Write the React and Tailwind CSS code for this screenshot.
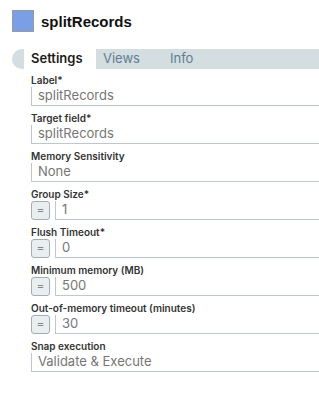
const fields = [
  { label: "Label*", value: "splitRecords" },
  { label: "Target field*", value: "splitRecords" },
  { label: "Memory Sensitivity", value: "None" },
  { label: "Group Size*", value: "1", expr: true },
  { label: "Flush Timeout*", value: "0", expr: true },
  { label: "Minimum memory (MB)", value: "500", expr: true },
  { label: "Out-of-memory timeout (minutes)", value: "30", expr: true },
  { label: "Snap execution", value: "Validate & Execute" },
];

function Field({ label, value, expr }) {
  return (
    <div className="flex flex-col">
      <span className="text-[10px] leading-[14px] font-semibold text-[#333]">
        {label}
      </span>
      <div className="flex items-stretch gap-[5px]">
        {expr && (
          <button className="flex h-[19px] w-[19px] shrink-0 items-center justify-center rounded-[3px] border border-[#a3adb2] bg-[#e9eef0] text-[12px] leading-none text-[#7d878c]">
            =
          </button>
        )}
        <div className="flex h-[19px] flex-1 items-center border-b border-l border-[#bcc8cd] pl-[6px] text-[13px] text-[#767676]">
          {value}
        </div>
      </div>
    </div>
  );
}

export default function App() {
  return (
    <div className="h-[400px] w-[319px] overflow-hidden bg-white [font-family:Inter,sans-serif]">
      <div className="flex items-center gap-[7px] px-[12px] pt-[8px]">
        <div className="h-[22px] w-[22px] border border-[#9a9a9a] bg-[#7b9fe6]" />
        <h1 className="mt-[3px] [font-family:'Liberation_Sans',sans-serif] text-[15px] font-bold text-[#111]">
          splitRecords
        </h1>
      </div>

      <div className="ml-[12px] mt-[15px] flex h-[20px] items-stretch rounded-l-full bg-[#d4dde0] pl-[12px] text-[13px]">
        <div className="flex w-[72px] items-center bg-white pl-[7px] font-semibold text-[#1c1c1c]">
          Settings
        </div>
        <div className="flex w-[67px] items-center pl-[7px] text-[#5f7f93]">
          Views
        </div>
        <div className="flex w-[67px] items-center pl-[7px] text-[#5f7f93]">
          Info
        </div>
      </div>

      <div className="mt-[4px] flex flex-col gap-[5px] pl-[31px]">
        {fields.map((f) => (
          <Field key={f.label} {...f} />
        ))}
      </div>
    </div>
  );
}
